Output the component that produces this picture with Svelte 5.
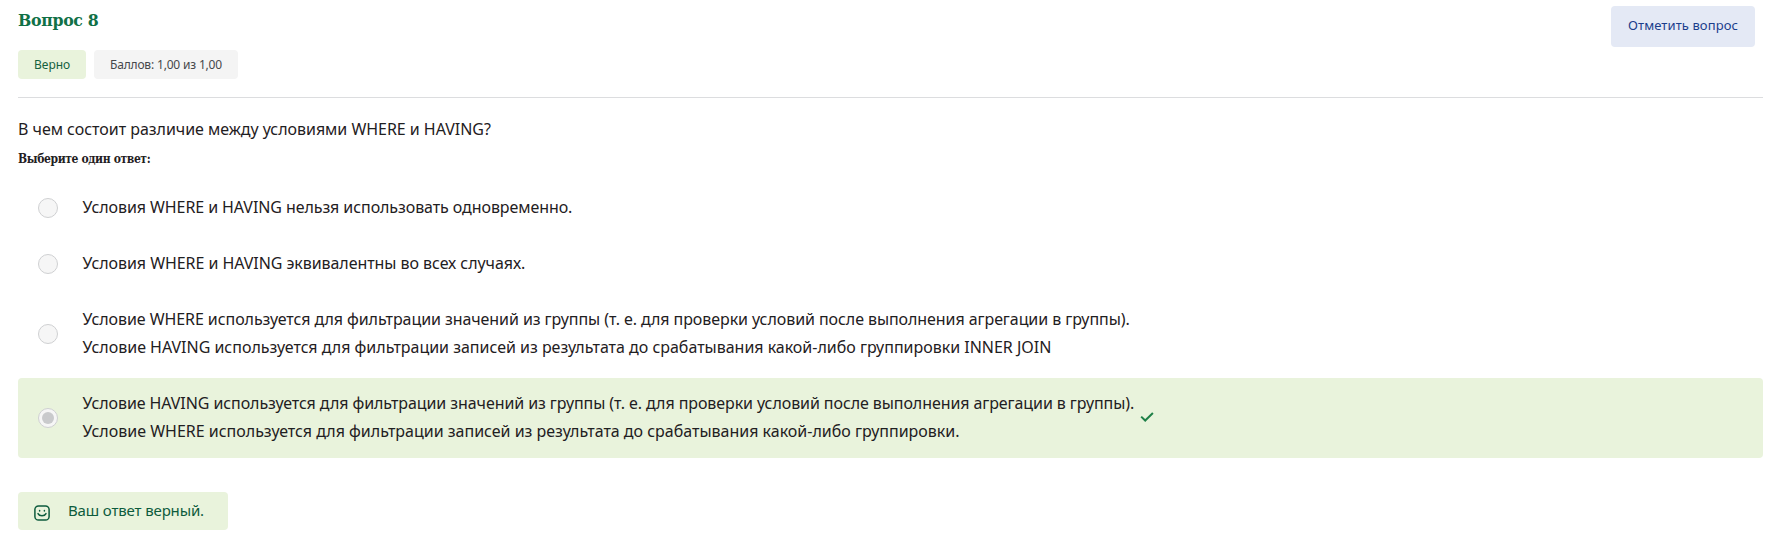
<script>
  const options = [
    { lines: [{ text: 'Условия WHERE и HAVING нельзя использовать одновременно.', spacing: -0.08 }] },
    { lines: [{ text: 'Условия WHERE и HAVING эквивалентны во всех случаях.', spacing: -0.06 }] },
    {
      lines: [
        { text: 'Условие WHERE используется для фильтрации значений из группы (т. е. для проверки условий после выполнения агрегации в группы).', spacing: -0.073 },
        { text: 'Условие HAVING используется для фильтрации записей из результата до срабатывания какой-либо группировки INNER JOIN', spacing: -0.015 }
      ]
    },
    {
      correct: true,
      lines: [
        { text: 'Условие HAVING используется для фильтрации значений из группы (т. е. для проверки условий после выполнения агрегации в группы).', spacing: -0.082 },
        { text: 'Условие WHERE используется для фильтрации записей из результата до срабатывания какой-либо группировки.', spacing: -0.006 }
      ]
    }
  ];
</script>

<main>
  <header>
    <div class="info">
      <h3>Вопрос 8</h3>
      <div class="badges">
        <span class="badge state">Верно</span>
        <span class="badge grade">Баллов: 1,00 из 1,00</span>
      </div>
    </div>
    <button class="flag">Отметить вопрос</button>
  </header>

  <p class="question">В чем состоит различие между условиями WHERE и HAVING?</p>
  <h6>Выберите один ответ:</h6>

  <div class="options">
    {#each options as option}
      <div class="option" class:correct={option.correct}>
        <span class="radio"></span>
        <div class="label">
          {#each option.lines as line}
            <div style="letter-spacing: {line.spacing}px">{line.text}</div>
          {/each}
        </div>
        {#if option.correct}
          <svg class="check" width="14" height="12" viewBox="0 0 14 12" fill="none" stroke="#1f8048" stroke-width="2">
            <path d="M1.2 5.6 5.2 9.5 12.9 2" />
          </svg>
        {/if}
      </div>
    {/each}
  </div>

  <div class="feedback">
    <svg width="16" height="16" viewBox="0 0 16 16" fill="none" stroke="#0d5b3c" stroke-width="1.5" stroke-linecap="round">
      <rect x="0.9" y="0.9" width="14.2" height="14.2" rx="3.6" />
      <path d="M4 8.6C5.4 11.5 10.6 11.5 12 8.6" />
      <path d="M5.6 5.6v.3M10.4 5.6v.3" />
    </svg>
    <span>Ваш ответ верный.</span>
  </div>
</main>

<style>
  :global(body) { background: #fff; }
  main {
    padding: 0 12px 0 18px;
    font-family: "Noto Sans", sans-serif;
    font-size: 16px;
    line-height: 28px;
    color: #1f2022;
  }
  header {
    display: flex;
    justify-content: space-between;
    align-items: flex-start;
    height: 97px;
    border-bottom: 1px solid #dcdddf;
  }
  h3 {
    margin: 8px 0 18px;
    font: bold 17.5px/24px "DejaVu Serif Condensed", "DejaVu Serif", serif;
    letter-spacing: -0.3px;
    color: #107046;
  }
  .badges { display: flex; gap: 8px; }
  .badge {
    box-sizing: border-box;
    height: 29px;
    padding: 0 16px;
    border-radius: 4px;
    font-size: 12px;
    line-height: 29px;
  }
  .state { width: 68px; background: #e9f3dc; color: #15613e; }
  .grade { width: 144px; background: #f4f4f4; color: #46484b; letter-spacing: -0.177px; white-space: nowrap; }
  .flag {
    width: 144px;
    height: 41px;
    margin: 6px 8px 0 0;
    padding: 0 0 3px;
    border: 0;
    border-radius: 4px;
    background: #e4e9f5;
    color: #1b3e8c;
    font: 13px "Noto Sans", sans-serif;
    letter-spacing: 0.09px;
  }
  .question { margin: 17px 0 0; letter-spacing: -0.035px; }
  h6 {
    margin: 6px 0 0;
    font: bold 12px/20px "DejaVu Serif Condensed", "DejaVu Serif", serif;
    letter-spacing: -0.38px;
  }
  .options { display: flex; flex-direction: column; gap: 4px; margin-top: 13px; }
  .option {
    display: flex;
    align-items: center;
    padding: 11px 20px 13px;
    border-radius: 4px;
  }
  .correct { background: #e9f3dc; }
  .radio {
    display: flex;
    align-items: center;
    justify-content: center;
    box-sizing: border-box;
    flex: none;
    width: 20px;
    height: 20px;
    margin: 2px 24.6px 0 0;
    border: 1px solid #cfd0d2;
    border-radius: 50%;
    background: #f6f6f6;
  }
  .correct .radio::after {
    content: "";
    width: 12px;
    height: 12px;
    border-radius: 50%;
    background: #c9cacc;
  }
  .label { white-space: nowrap; }
  .check { margin-left: 6px; }
  .feedback {
    display: flex;
    align-items: center;
    box-sizing: border-box;
    width: 210px;
    height: 38px;
    margin-top: 34px;
    padding-left: 16px;
    border-radius: 4px;
    background: #e9f3dc;
    color: #0d5b3c;
    font-size: 15px;
    letter-spacing: -0.14px;
  }
  .feedback svg { margin: 4px 18px 0 0; }
  .feedback span { padding-bottom: 2px; }
</style>
